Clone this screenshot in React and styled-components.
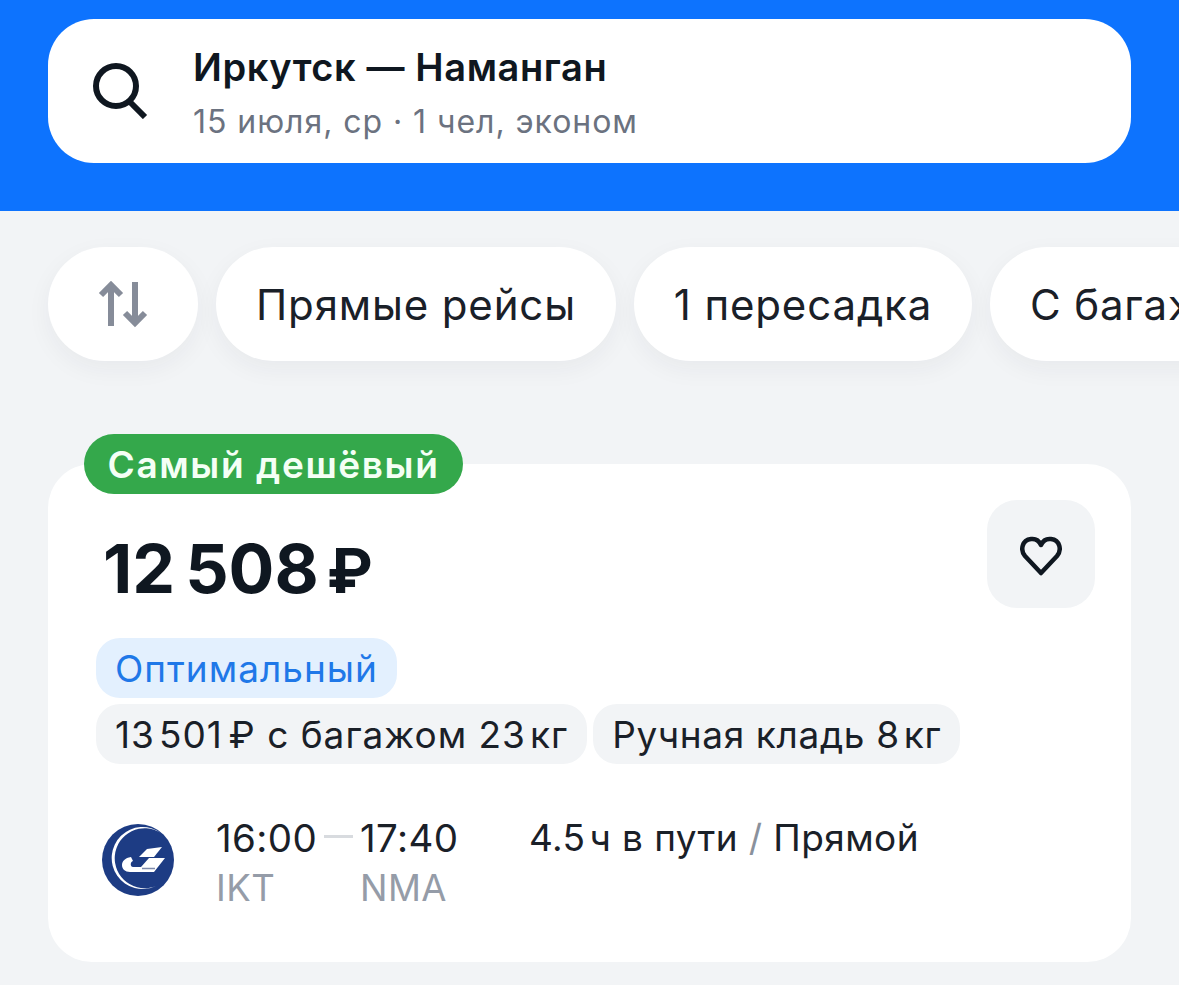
import React from 'react';
import styled, { createGlobalStyle } from 'styled-components';

const Global = createGlobalStyle`
  html, body {
    margin: 0;
    padding: 0;
    background: #f2f4f6;
    font-family: Inter, "Liberation Sans", sans-serif;
    overflow: hidden;
  }
`;

const Page = styled.div`
  width: 1179px;
  height: 985px;
  overflow: hidden;
  background: #f2f4f6;
`;

const Header = styled.header`
  background: #0d73fe;
  height: 211px;
  padding: 19px 48px 0;
  box-sizing: border-box;
`;

const SearchBar = styled.div`
  height: 144px;
  background: #fff;
  border-radius: 46px;
  display: flex;
  align-items: center;
  padding-left: 44px;
  box-sizing: border-box;
`;

const SearchIcon = styled.svg`
  width: 56px;
  height: 56px;
  margin-right: 45px;
  flex: none;
`;

const SearchText = styled.div`
  padding-top: 4px;
`;

const Route = styled.div`
  font-size: 38px;
  line-height: 46px;
  font-weight: 600;
  color: #0f1720;
  letter-spacing: 0.6px;
`;

const Meta = styled.div`
  font-size: 32px;
  line-height: 40px;
  margin-top: 12px;
  color: #6b7280;
  letter-spacing: 0.95px;
`;

const Chips = styled.div`
  display: flex;
  gap: 18px;
  padding: 36px 0 40px 48px;
  width: 1131px;
  overflow: hidden;
  white-space: nowrap;
`;

const Chip = styled.div`
  height: 114px;
  width: ${p => p.$w}px;
  flex: none;
  background: #fff;
  border-radius: 57px;
  box-shadow: 0 8px 24px rgba(30, 40, 60, 0.05);
  display: flex;
  align-items: center;
  justify-content: ${p => (p.$open ? 'flex-start' : 'center')};
  padding-left: ${p => (p.$open ? '40px' : '0')};
  box-sizing: border-box;
  font-size: 42px;
  letter-spacing: 0.85px;
  color: #1a2028;
`;

const Card = styled.section`
  position: relative;
  margin: 63px 48px 0;
  height: 498px;
  background: #fff;
  border-radius: 44px;
  padding: 36px 36px 0 48px;
  box-sizing: border-box;
`;

const Badge = styled.div`
  position: absolute;
  left: 36px;
  top: -30px;
  width: 379px;
  height: 60px;
  border-radius: 30px;
  background: #34a84b;
  color: #f4fff5;
  font-size: 37px;
  font-weight: 600;
  letter-spacing: 1.6px;
  display: flex;
  align-items: center;
  justify-content: center;
`;

const TopRow = styled.div`
  display: flex;
  justify-content: space-between;
  align-items: flex-start;
`;

const Price = styled.div`
  font-size: 68px;
  line-height: 80px;
  font-weight: 700;
  color: #0f1720;
  margin: 28px 0 0 7px;
  display: flex;
  align-items: baseline;
`;

const Thin = styled.span`
  margin-left: ${p => p.$gap || 6}px;
`;

const Rouble = styled.span`
  margin-left: 8px;
  font-size: 62px;
`;

const FavButton = styled.div`
  width: 108px;
  height: 108px;
  padding-top: 3px;
  border-radius: 30px;
  background: #f2f4f6;
  display: flex;
  align-items: center;
  justify-content: center;
  box-sizing: border-box;
`;

const Tags = styled.div`
  display: flex;
  flex-direction: column;
  gap: 6px;
  margin-top: 27px;
`;

const TagRow = styled.div`
  display: flex;
  gap: 6px;
`;

const Tag = styled.div`
  height: 60px;
  padding: 0 19px;
  border-radius: 24px;
  display: flex;
  align-items: center;
  white-space: pre;
  font-size: 37px;
  letter-spacing: ${p => (p.$tight ? '0.65px' : '1px')};
  background: ${p => (p.$blue ? '#e3f0fe' : '#f2f4f6')};
  color: ${p => (p.$blue ? '#1f78e8' : '#1a2028')};
`;

const Flight = styled.div`
  display: flex;
  align-items: flex-start;
  margin-top: 51px;
`;

const Logo = styled.svg`
  width: 76px;
  height: 76px;
  margin: 9px 40px 0 4px;
  flex: none;
`;

const Times = styled.div`
  display: grid;
  grid-template-columns: 144px 169px auto;
  row-gap: 4px;
  font-size: 37px;
  line-height: 46px;
  color: #1a2028;
  letter-spacing: 0.4px;
`;

const Time = styled.div`
  position: relative;
  font-size: 38.5px;
  letter-spacing: 0.4px;
  &::after {
    content: ${p => (p.$dash ? "''" : 'none')};
    position: absolute;
    left: 108px;
    top: 20px;
    width: 29px;
    height: 3px;
    background: #d8dbdf;
  }
`;

const Duration = styled.div`
  white-space: pre;
`;

const Code = styled.div`
  color: #959ca8;
  font-size: 36.5px;
`;

const Slash = styled.span`
  color: #8a919c;
`;

const SortIcon = () => (
  <svg width="50" height="50" viewBox="0 0 50 50" fill="none" stroke="#868c99" strokeWidth="6">
    <path d="M13 47V6M3 16L13 6l10 10" />
    <path d="M37 3v41M27 34l10 10 10-10" />
  </svg>
);

const App = () => (
  <Page>
    <Global />
    <Header>
      <SearchBar>
        <SearchIcon viewBox="0 0 56 56" fill="none" stroke="#0f1720" strokeWidth="6">
          <circle cx="24" cy="23" r="20" />
          <path d="M37 38l16 16" />
        </SearchIcon>
        <SearchText>
          <Route>Иркутск — Наманган</Route>
          <Meta>15 июля, ср · 1 чел, эконом</Meta>
        </SearchText>
      </SearchBar>
    </Header>
    <Chips>
      <Chip $w={150}><SortIcon /></Chip>
      <Chip $w={400}>Прямые рейсы</Chip>
      <Chip $w={338}>1 пересадка</Chip>
      <Chip $w={300} $open>С багажом</Chip>
    </Chips>
    <Card>
      <Badge>Самый дешёвый</Badge>
      <TopRow>
        <Price>12<Thin $gap={10}>508</Thin><Rouble>₽</Rouble></Price>
        <FavButton>
          <svg width="42" height="40" viewBox="0 0 42 40" fill="none" stroke="#0f1720" strokeWidth="4.5" strokeLinejoin="round">
            <path d="M21 37L5 20C0 14 2 4 11 3c4-.5 8 1.500 10 6 2-4.500 6-6.500 10-6 9 1 11 11 6 17L21 37z" />
          </svg>
        </FavButton>
      </TopRow>
      <Tags>
        <TagRow>
          <Tag $blue>Оптимальный</Tag>
        </TagRow>
        <TagRow>
          <Tag>13<Thin $gap={4}>501</Thin><Thin $gap={6}>₽</Thin> с багажом 23<Thin $gap={4}>кг</Thin></Tag>
          <Tag $tight>Ручная кладь 8<Thin $gap={4}>кг</Thin></Tag>
        </TagRow>
      </Tags>
      <Flight>
        <Logo viewBox="0 0 76 76">
          <circle cx="38" cy="36" r="36" fill="#1d3c84" />
          <path d="M61 9A31 31 0 1 0 56 62A30 30 0 1 1 61 9z" fill="#fff" />
          <path d="M39 33L47 25L62 23L54 33z" fill="#fff" />
          <path d="M31 33C25 34 22 37 22 41C22 45 25 48 30 48H54L65 34H49L41 43H33C30 43 30 38 33 37z" fill="#fff" />
          <path d="M42 44.500H55" stroke="#7f8bab" strokeWidth="1.500" />
        </Logo>
        <Times>
          <Time $dash>16:00</Time>
          <Time>17:40</Time>
          <Duration>4.5<Thin $gap={4}>ч в пути</Thin> <Slash>/</Slash> Прямой</Duration>
          <Code>IKT</Code>
          <Code>NMA</Code>
        </Times>
      </Flight>
    </Card>
  </Page>
);

export default App;
